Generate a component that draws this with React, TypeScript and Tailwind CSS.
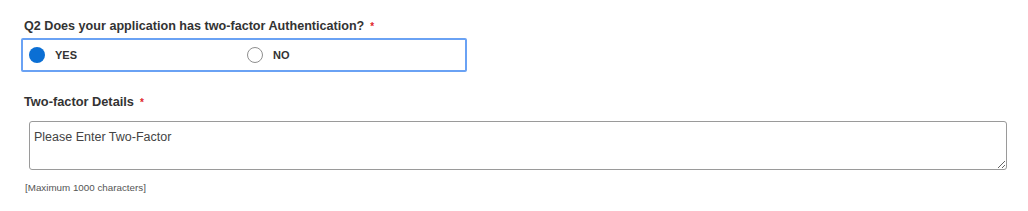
import { useState } from "react";

const font = "font-['Helvetica','Liberation_Sans',Arial,sans-serif]";

type RadioProps = {
  label: string;
  checked: boolean;
  onSelect: () => void;
};

const RadioOption = ({ label, checked, onSelect }: RadioProps) => (
  <label className="flex w-[220px] cursor-pointer items-center" onClick={onSelect}>
    {checked ? (
      <span className="h-4 w-4 rounded-full bg-[#0b6fd4]" />
    ) : (
      <span className="h-4 w-4 rounded-full border border-[#8f8f8f] bg-white" />
    )}
    <span className="ml-[10px] text-[11px] font-bold leading-[14px] text-[#333]">
      {label}
    </span>
  </label>
);

export default function App() {
  const [answer, setAnswer] = useState("yes");

  return (
    <div className={`${font} min-h-[211px] w-[1028px] bg-white pl-6 pt-[18px]`}>
      {/* question */}
      <div className="text-[12.6px] font-bold leading-4 text-[#333]">
        Q2 Does your application has two-factor Authentication?
        <span className="ml-[6px] text-[10px] text-[#e0262a]">*</span>
      </div>
      <div className="-ml-[3px] mt-[3px] flex h-[34px] w-[446px] items-center rounded-[2px] border-2 border-[#6aa2f4] pl-[6px]">
        <RadioOption label="YES" checked={answer === "yes"} onSelect={() => setAnswer("yes")} />
        <RadioOption label="NO" checked={answer === "no"} onSelect={() => setAnswer("no")} />
      </div>

      {/* details */}
      <div className="mt-[22px] text-[12.8px] font-bold leading-4 text-[#333]">
        Two-factor Details
        <span className="ml-[6px] text-[10px] text-[#e0262a]">*</span>
      </div>
      <textarea
        className="ml-[5px] mt-[10px] block h-[49px] w-[978px] rounded-[3px] border border-[#9a9a9a] px-1 pt-[7px] text-[12.5px] leading-4 text-[#333] placeholder:text-[#444] outline-none"
        placeholder="Please Enter Two-Factor"
      />
      <div className="ml-[1px] mt-[12px] text-[9.8px] leading-3 text-[#555]">
        [Maximum 1000 characters]
      </div>
    </div>
  );
}
